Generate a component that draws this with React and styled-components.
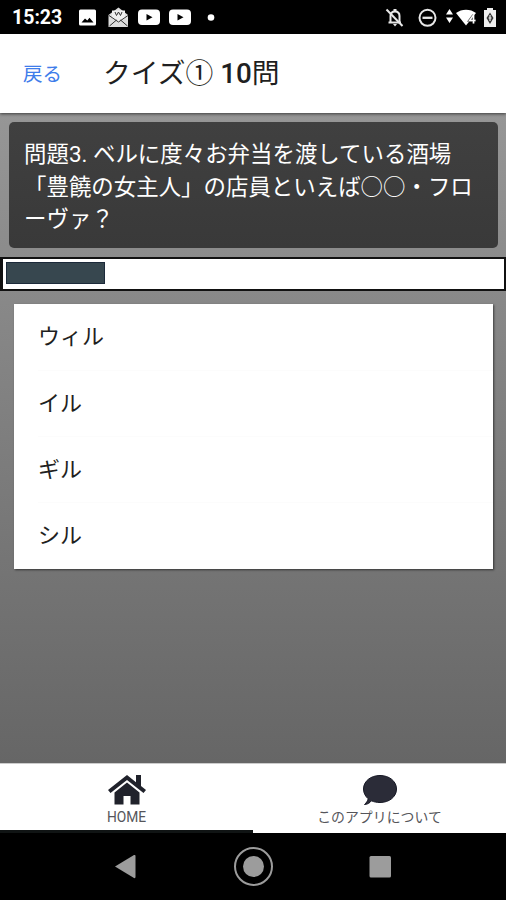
import React from "react";
import styled, { createGlobalStyle } from "styled-components";

const GlobalStyle = createGlobalStyle`
  * { box-sizing: border-box; }
  body { margin: 0; background: #000; }
`;

const Screen = styled.div`
  width: 506px;
  height: 900px;
  display: flex;
  flex-direction: column;
  overflow: hidden;
  background: #000;
  color: #1f1f21;
  font-family: Roboto, "Noto Sans CJK JP", sans-serif;
`;

const StatusBar = styled.div`
  height: 34px;
  flex: none;
  display: flex;
  align-items: center;
  padding-left: 12px;
  color: #fff;
`;

const Clock = styled.span`
  width: 65px;
  font-size: 19.5px;
  font-weight: 700;
  line-height: 34px;
  padding-top: 2px;
`;

const StatusIcons = styled.svg`
  display: block;
  height: 34px;
  width: ${(p) => p.$width}px;
  margin-left: ${(p) => p.$push || "0"};
`;

const Toolbar = styled.header`
  height: 79px;
  flex: none;
  display: flex;
  align-items: center;
  padding-left: 23px;
  background: #fff;
  position: relative;
  box-shadow: 0 1px 3px rgba(0, 0, 0, 0.6);
`;

const BackButton = styled.button`
  width: 80px;
  padding: 2px 0 0;
  border: 0;
  background: none;
  text-align: left;
  color: #3f7dea;
  font: 400 19.5px/30px Roboto, "Noto Sans CJK JP", sans-serif;
`;

const Title = styled.h1`
  margin: 0;
  font-size: 27.8px;
  font-weight: 400;
  line-height: 40px;
  white-space: pre;
`;

const TitleNumber = styled.span`
  font-weight: 500;
`;

const Content = styled.main`
  flex: 1;
  min-height: 0;
  padding-top: 9px;
  background: linear-gradient(#969696, #666);
`;

const Question = styled.p`
  height: 126px;
  margin: 0 8px 0 9px;
  padding: 16px 10px 0 15px;
  border-radius: 5px;
  background: linear-gradient(#404040, #393939);
  color: #fff;
  font-size: 22.45px;
  line-height: 32.7px;
  white-space: pre;
`;

const Timer = styled.div`
  height: 34px;
  margin-top: 9px;
  padding: 3px;
  border: 2px solid #111;
  border-left-width: 3px;
  background: #fff;
`;

const TimerFill = styled.div`
  width: 99px;
  height: 22px;
  background: #37474f;
  border: 1px solid #1c2a3a;
`;

const Answers = styled.ul`
  list-style: none;
  margin: 13px 13px 0 14px;
  padding: 0;
  height: 265px;
  background: #fff;
  box-shadow: 1px 1px 2px rgba(0, 0, 0, 0.55);
`;

const Answer = styled.li`
  height: 66px;
  margin-left: 24px;
  line-height: 66px;
  font-size: 22px;
  & + & { border-top: 1px solid #fcfcfc; }
`;

const TabBar = styled.nav`
  height: 70px;
  flex: none;
  display: grid;
  grid-template-columns: 1fr 1fr;
  background: #fff;
  border-top: 1px solid #ccc;
`;

const Tab = styled.div`
  display: flex;
  flex-direction: column;
  align-items: center;
  padding-top: 10px;
  border-bottom: ${(p) => (p.$active ? "3px solid #101414" : "0")};
  font-size: ${(p) => p.$size}px;
  line-height: 18px;
  color: #55555a;
  svg { display: block; margin-bottom: 2px; }
`;

const SystemNav = styled.div`
  height: 67px;
  flex: none;
  svg { display: block; }
`;

const answers = ["ウィル", "イル", "ギル", "シル"];

const NotificationIcons = () => (
  <StatusIcons $width={150} viewBox="77 0 150 34">
    <rect x="79" y="9.5" width="17" height="16" rx="1.5" fill="#fff" />
    <path d="M81.500 22.500l3.500-4 2.300 2 2.200-2.800 4 4.800z" fill="#000" />
    <path d="M108.500 15l10-7.500 9.500 7.500v12h-19.500z" fill="#ddd" />
    <path d="M112 10.500h13v8l-6.500 4-6.500-4z" fill="#eee" />
    <path d="M109 15.500l9.500 6.500 9.500-6.500M109.500 26l7-6M127.500 26l-7-6M115 12l1.500 3.500 2-3.500 2 3.500 1.500-3.500" fill="none" stroke="#333" strokeWidth="1" />
    {[138, 169].map((x) => (
      <g key={x}>
        <rect x={x} y="9.500" width="22" height="15.500" rx="4" fill="#fff" />
        <path d={`M${x + 8.5} 14v6.500l6-3.250z`} fill="#000" />
      </g>
    ))}
    <circle cx="211" cy="17.500" r="3.300" fill="#fff" />
  </StatusIcons>
);

const SystemIcons = () => (
  <StatusIcons $width={126} $push="auto" viewBox="380 0 126 34">
    <g fill="none" stroke="#e8e8e8" strokeWidth="2">
      <path d="M388.500 22.500h12.500M390.500 22v-6c0-3 2-4.500 4.500-4.500s4.500 1.500 4.500 4.500v6" />
      <path d="M386.500 9.500l16 16.500" />
      <circle cx="427.500" cy="17.800" r="8" />
      <path d="M422.500 17.800h10" strokeWidth="2.300" />
    </g>
    <path d="M393.500 9h3v3h-3zM393 24h4l-2 2.500z" fill="#e8e8e8" />
    <path d="M446 14.500l3.500-5.500 3.500 5.500zM446 17.500l3.500 5.500 3.500-5.500z" fill="#fff" />
    <path d="M456 13c5.500-4.500 14.500-4.500 20 0L466 25.500z" fill="#fff" />
    <path d="M473.500 15l-4 5.500h6M473.500 15v8.500" fill="none" stroke="#555" strokeWidth="2.600" />
    <path d="M473.500 15l-4 5.500h6M473.500 15v8.500" fill="none" stroke="#fff" strokeWidth="1.300" />
    <path d="M484 10h3V8h6v2h3v17h-12z" fill="#eee" />
    <path d="M490 12.500l-3.500 5.500 3.500 6 3.500-6z" fill="#333" />
    <path d="M490 15v6M488.500 18h3" stroke="#eee" strokeWidth="1.200" />
  </StatusIcons>
);

const HomeIcon = () => (
  <svg width="38" height="32" viewBox="0 0 38 32" fill="#20222b">
    <path d="M19 1L0 16l2.500 3L19 6l16.500 13L38 16l-5-4V1h-5v7.200z" />
    <path d="M19 8.500L6.500 18.500v12h9V22h7v8.500h9v-12z" />
  </svg>
);

const BubbleIcon = () => (
  <svg width="34" height="32" viewBox="0 0 34 32" fill="#2b2c38" stroke="#151724">
    <path d="M17 1.500C8 1.500.5 7 .5 15c0 4 2 7.500 4.700 9.800-.5 2-1.800 4-3.700 5.700 3.800-.3 5-1.600 7-3.700 2.500 1.200 5.500 1.700 8.500 1.700 9 0 16.500-5.500 16.500-13.500S26 1.500 17 1.500z" />
  </svg>
);

export default function App() {
  return (
    <Screen>
      <GlobalStyle />
      <StatusBar>
        <Clock>15:23</Clock>
        <NotificationIcons />
        <SystemIcons />
      </StatusBar>
      <Toolbar>
        <BackButton>戻る</BackButton>
        <Title>クイズ① <TitleNumber>10</TitleNumber>問</Title>
      </Toolbar>
      <Content>
        <Question>
          {"問題3. ベルに度々お弁当を渡している酒場\n「豊饒の女主人」の店員といえば○○・フロ\nーヴァ？"}
        </Question>
        <Timer><TimerFill /></Timer>
        <Answers>
          {answers.map((text) => <Answer key={text}>{text}</Answer>)}
        </Answers>
      </Content>
      <TabBar>
        <Tab $active $size={13.8}><HomeIcon />HOME</Tab>
        <Tab $size={13.9}><BubbleIcon />このアプリについて</Tab>
      </TabBar>
      <SystemNav>
        <svg width="506" height="67" viewBox="0 833 506 67" fill="#9c9c9c">
          <path d="M115 866.500l19-11.500q1.500-.5 1.500 1v21q0 1.500-1.500 1z" />
          <circle cx="253.500" cy="866.500" r="18.500" fill="none" stroke="#9c9c9c" strokeWidth="2" />
          <circle cx="253.500" cy="866.500" r="10.500" />
          <rect x="369.500" y="856" width="21.500" height="21.500" rx="1.500" />
        </svg>
      </SystemNav>
    </Screen>
  );
}
